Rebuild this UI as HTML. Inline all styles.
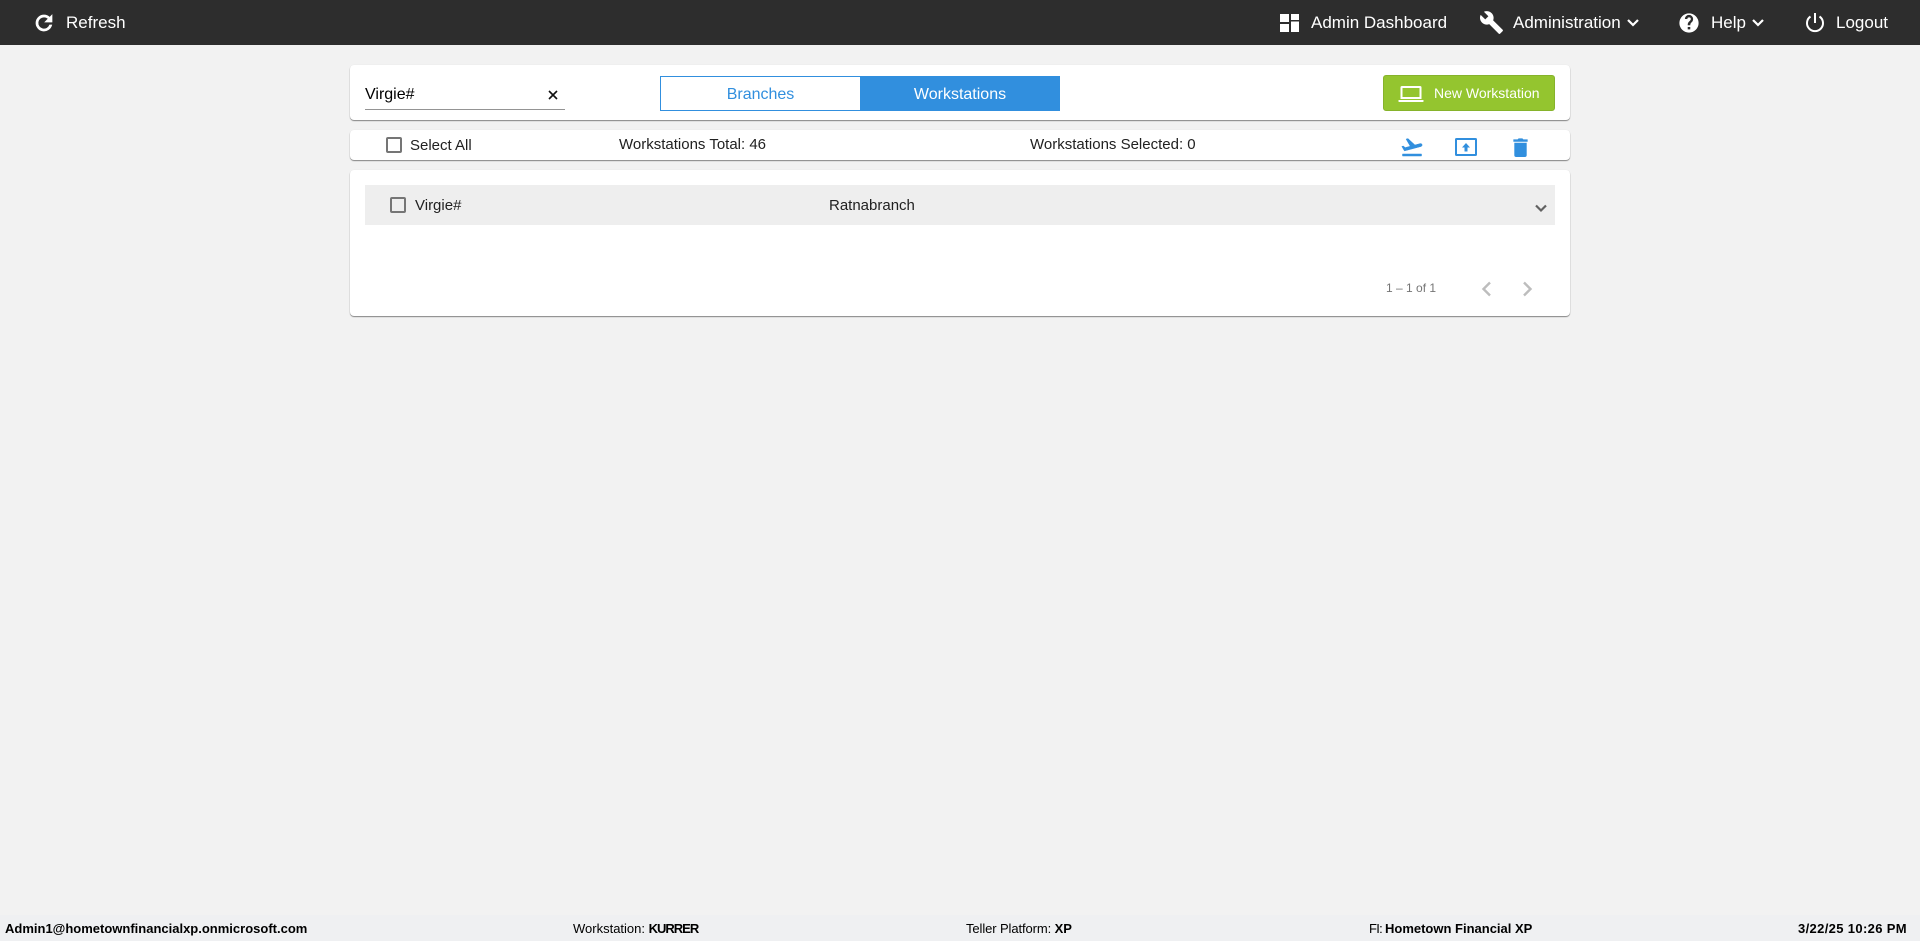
<!DOCTYPE html>
<html lang="en">
<head>
<meta charset="utf-8">
<title>Workstations</title>
<style>
html,body{margin:0;padding:0;width:1920px;height:941px;overflow:hidden;background:#f2f2f2;font-family:"Liberation Sans",Arial,sans-serif;color:#212121}
*{box-sizing:border-box}
.a{position:absolute;white-space:nowrap}
.top{position:absolute;left:0;top:0;width:1920px;height:45px;background:#2d2d2d}
.t{position:absolute;top:13px;font-size:17px;line-height:20px;color:#fff;white-space:nowrap}
.card{position:absolute;left:350px;width:1220px;background:#fff;border-radius:4px;box-shadow:0 1px 1px rgba(0,0,0,.45),0 0 1px rgba(0,0,0,.08)}
.cb{position:absolute;width:16px;height:16px;border:2px solid #757575;border-radius:2px;background:transparent}
.s{font-size:15px;line-height:18px;color:#212121}
.foot{position:absolute;left:0;top:915px;width:1920px;height:26px;background:#eff0f2}
.f{position:absolute;top:921px;font-size:13px;line-height:15px;color:#000;white-space:nowrap}
svg{position:absolute;display:block}
</style>
</head>
<body>
<div class="top"></div>
<svg style="left:32px;top:11px" width="24" height="24" viewBox="0 0 24 24"><path fill="#fff" stroke="#fff" stroke-width=".7" d="M17.65 6.35A7.96 7.96 0 0 0 12 4a8 8 0 1 0 7.73 10h-2.08A6 6 0 1 1 12 6c1.66 0 3.14.69 4.22 1.78L13 11h7V4l-2.35 2.35z"/></svg>
<div class="t" style="left:66px">Refresh</div>

<svg style="left:1280px;top:14px" width="19" height="18" viewBox="0 0 19 18"><path fill="#fff" d="M0 0h9v8H0zM11 0h8v6h-8zM11 7.500h8V18h-8zM0 10h9v8H0z"/></svg>
<div class="t" style="left:1311px">Admin Dashboard</div>

<svg style="left:1479px;top:10px" width="25" height="25" viewBox="0 0 24 24"><path fill="#fff" d="M22.700 19l-9.100-9.100c.9-2.300.4-5-1.500-6.900-2-2-5-2.400-7.400-1.300L9 6 6 9 1.600 4.700C.4 7.100.9 10.100 2.900 12.100c1.900 1.900 4.600 2.400 6.900 1.500l9.100 9.100c.4.400 1 .4 1.400 0l2.300-2.300c.5-.4.500-1.100.1-1.400z"/></svg>
<div class="t" style="left:1513px">Administration</div>
<svg style="left:1626px;top:16px" width="14" height="14" viewBox="0 0 14 14"><path fill="none" stroke="#fff" stroke-width="2.200" d="M2 4l5 5 5-5"/></svg>

<svg style="left:1678px;top:12px" width="22" height="22" viewBox="0 0 24 24"><path fill="#fff" d="M12 1.500a10.500 10.500 0 1 0 0 21 10.500 10.500 0 0 0 0-21zm1.400 17.500h-2.800v-2.700h2.800V19zm2.200-8.500l-1.100 1.100c-.8.800-1.100 1.400-1.100 2.900h-2.800v-.6c0-1.300.5-2.400 1.300-3.200l1.500-1.500c.4-.4.600-.9.600-1.500a1.900 1.900 0 0 0-3.800 0H7.500a4.500 4.500 0 0 1 9 0c0 1-.3 2-.9 2.800z"/></svg>
<div class="t" style="left:1711px">Help</div>
<svg style="left:1751px;top:16px" width="14" height="14" viewBox="0 0 14 14"><path fill="none" stroke="#fff" stroke-width="2.200" d="M2 4l5 5 5-5"/></svg>

<svg style="left:1804px;top:13px" width="22" height="20" viewBox="0 0 22 20"><path fill="none" stroke="#fff" stroke-width="2" d="M11 0v10M6.500 3.500a8 8 0 1 0 9 0"/></svg>
<div class="t" style="left:1836px">Logout</div>

<!-- search card -->
<div class="card" style="top:65px;height:55px"></div>
<div class="a" style="left:365px;top:85px;font-size:16px;line-height:19px;color:#000">Virgie#</div>
<svg style="left:547px;top:89px" width="12" height="12" viewBox="0 0 12 12"><path fill="none" stroke="#111" stroke-width="1.600" d="M2 2l8 8M10 2l-8 8"/></svg>
<div class="a" style="left:365px;top:109px;width:200px;height:1px;background:#949494"></div>

<div class="a" style="left:660px;top:76px;width:200px;height:35px;border:1px solid #318fde;border-right:0;background:#fff;color:#318fde;font-size:16px;line-height:35px;text-align:center">Branches</div>
<div class="a" style="left:860px;top:76px;width:200px;height:35px;background:#318fde;color:#fff;font-size:16px;line-height:37px;text-align:center">Workstations</div>

<div class="a" style="left:1383px;top:75px;width:172px;height:36px;background:#94c52f;border:1px solid #86b32b;border-radius:3px"></div>
<svg style="left:1398px;top:84px" width="26" height="20" viewBox="0 0 26 20"><path fill="#fff" d="M4 2h18a1.500 1.500 0 0 1 1.500 1.500V15H2.500V3.500A1.500 1.500 0 0 1 4 2zm.500 2v9h17V4zM.500 16h25v1.500a.5.500 0 0 1-.5.500H1a.5.500 0 0 1-.5-.5z"/></svg>
<div class="a" style="left:1434px;top:85px;font-size:14px;line-height:17px;color:#fff">New Workstation</div>

<!-- toolbar card -->
<div class="card" style="top:130px;height:30px"></div>
<div class="cb" style="left:386px;top:137px"></div>
<div class="a s" style="left:410px;top:137px">Select All</div>
<div class="a s" style="left:619px;top:136px">Workstations Total: 46</div>
<div class="a s" style="left:1030px;top:136px">Workstations Selected: 0</div>
<svg style="left:1400px;top:135px" width="24" height="24" viewBox="0 0 24 24"><path fill="#318fde" stroke="#318fde" stroke-width=".5" d="M2.500 19h19v2h-19v-2zm19.570-9.360c-.210-.800-1.040-1.280-1.840-1.060L14.920 10l-6.900-6.430-1.930.510 4.140 7.170-4.970 1.330-1.970-1.540-1.450.390 2.590 4.490s7.120-1.900 16.570-4.430c.81-.230 1.280-1.050 1.070-1.850z"/></svg>
<svg style="left:1455px;top:138px" width="22" height="18" viewBox="0 0 22 18"><path fill="#318fde" d="M1.500 0h19A1.500 1.500 0 0 1 22 1.500v15a1.500 1.500 0 0 1-1.500 1.500h-19A1.500 1.500 0 0 1 0 16.500v-15A1.500 1.500 0 0 1 1.500 0zM2 2v14h18V2zm9 3l4 4.500h-2.500v4h-3v-4H7z"/></svg>
<svg style="left:1511px;top:137px" width="19" height="20" viewBox="0 0 19 21"><path fill="#318fde" d="M3 6h13v13a2 2 0 0 1-2 2H5a2 2 0 0 1-2-2zM2 2.500h4.500L7.500 1.500h4l1 1H17V5H2z"/></svg>

<!-- list card -->
<div class="card" style="top:170px;height:146px"></div>
<div class="a" style="left:365px;top:185px;width:1190px;height:40px;background:#eeeeee"></div>
<div class="cb" style="left:390px;top:197px"></div>
<div class="a s" style="left:415px;top:197px">Virgie#</div>
<div class="a s" style="left:829px;top:197px">Ratnabranch</div>
<svg style="left:1534px;top:201px" width="14" height="14" viewBox="0 0 14 14"><path fill="none" stroke="#616161" stroke-width="2.200" d="M2 4.500l5 5 5-5"/></svg>
<div class="a" style="left:1386px;top:281px;font-size:12px;line-height:15px;color:#757575">1 – 1 of 1</div>
<svg style="left:1480px;top:280px" width="14" height="18" viewBox="0 0 14 18"><path fill="none" stroke="#bdbdbd" stroke-width="2.400" d="M10 2.500L3.500 9l6.500 6.500"/></svg>
<svg style="left:1520px;top:280px" width="14" height="18" viewBox="0 0 14 18"><path fill="none" stroke="#bdbdbd" stroke-width="2.400" d="M4 2.500L10.500 9 4 15.500"/></svg>

<!-- footer -->
<div class="foot"></div>
<div class="f" style="left:5px;font-weight:700">Admin1@hometownfinancialxp.onmicrosoft.com</div>
<div class="f" style="left:573px"><span>Workstation: </span><b style="letter-spacing:-1px">KURRER</b></div>
<div class="f" style="left:966px"><span style="letter-spacing:-.1px">Teller Platform: </span><b>XP</b></div>
<div class="f" style="left:1369px"><span style="letter-spacing:-.7px">FI: </span><b>Hometown Financial XP</b></div>
<div class="f" style="left:1798px;font-weight:700;letter-spacing:.35px">3/22/25 10:26 PM</div>
</body>
</html>
